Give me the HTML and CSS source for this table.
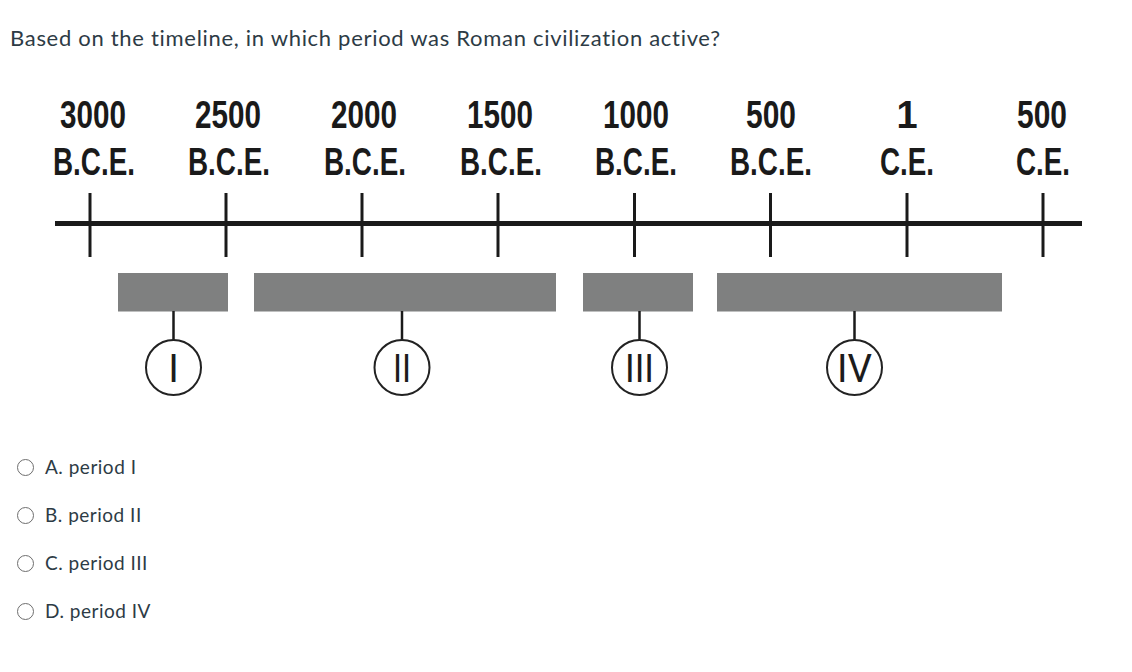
FILE: index.html
```html
<!DOCTYPE html>
<html>
<head>
<meta charset="utf-8">
<link rel="stylesheet" href="styles.css">
</head>
<body>
<p class="question">Based on the timeline, in which period was Roman civilization active?</p>
<svg class="timeline" width="1132" height="330" viewBox="0 80 1132 330" xmlns="http://www.w3.org/2000/svg">
  <g class="labels">
    <text x="93" y="128" textLength="66" lengthAdjust="spacingAndGlyphs">3000</text>
    <text x="94" y="175" textLength="82" lengthAdjust="spacingAndGlyphs">B.C.E.</text>
    <text x="228" y="128" textLength="66" lengthAdjust="spacingAndGlyphs">2500</text>
    <text x="229" y="175" textLength="82" lengthAdjust="spacingAndGlyphs">B.C.E.</text>
    <text x="364" y="128" textLength="66" lengthAdjust="spacingAndGlyphs">2000</text>
    <text x="365" y="175" textLength="82" lengthAdjust="spacingAndGlyphs">B.C.E.</text>
    <text x="500" y="128" textLength="66" lengthAdjust="spacingAndGlyphs">1500</text>
    <text x="501" y="175" textLength="82" lengthAdjust="spacingAndGlyphs">B.C.E.</text>
    <text x="636" y="128" textLength="66" lengthAdjust="spacingAndGlyphs">1000</text>
    <text x="636" y="175" textLength="82" lengthAdjust="spacingAndGlyphs">B.C.E.</text>
    <text x="771" y="128" textLength="50" lengthAdjust="spacingAndGlyphs">500</text>
    <text x="771" y="175" textLength="82" lengthAdjust="spacingAndGlyphs">B.C.E.</text>
    <text x="907" y="128">1</text>
    <text x="907" y="175" textLength="54" lengthAdjust="spacingAndGlyphs">C.E.</text>
    <text x="1042" y="128" textLength="50" lengthAdjust="spacingAndGlyphs">500</text>
    <text x="1043" y="175" textLength="54" lengthAdjust="spacingAndGlyphs">C.E.</text>
  </g>
  <line class="axis" x1="55" y1="223.5" x2="1082" y2="223.5"/>
  <g class="ticks">
    <line x1="90" y1="193" x2="90" y2="257"/>
    <line x1="226" y1="193" x2="226" y2="257"/>
    <line x1="362" y1="193" x2="362" y2="257"/>
    <line x1="498" y1="193" x2="498" y2="257"/>
    <line x1="634.5" y1="193" x2="634.5" y2="257"/>
    <line x1="770.5" y1="193" x2="770.5" y2="257"/>
    <line x1="907" y1="193" x2="907" y2="257"/>
    <line x1="1043" y1="193" x2="1043" y2="257"/>
  </g>
  <g class="bars">
    <rect x="118" y="273" width="110" height="38.5"/>
    <rect x="254" y="273" width="302" height="38.5"/>
    <rect x="583" y="273" width="110" height="38.5"/>
    <rect x="717" y="273" width="285" height="38.5"/>
  </g>
  <g class="stems">
    <line x1="173.5" y1="311" x2="173.5" y2="340"/>
    <line x1="402" y1="311" x2="402" y2="340"/>
    <line x1="639.5" y1="311" x2="639.5" y2="340"/>
    <line x1="854.5" y1="311" x2="854.5" y2="340"/>
  </g>
  <g class="circles">
    <circle cx="173.5" cy="367.5" r="27.5"/>
    <circle cx="402" cy="367.5" r="27.5"/>
    <circle cx="639.5" cy="367.5" r="27.5"/>
    <circle cx="854.5" cy="367.5" r="27.5"/>
  </g>
  <g class="numerals">
    <text x="173.5" y="381.5">I</text>
    <text x="402" y="381.5" textLength="18" lengthAdjust="spacingAndGlyphs">II</text>
    <text x="639.5" y="381.5" textLength="29" lengthAdjust="spacingAndGlyphs">III</text>
    <text x="854.5" y="381.5" textLength="35" lengthAdjust="spacingAndGlyphs">IV</text>
  </g>
</svg>
<div class="options">
  <label class="option"><span class="radio"></span><span class="opt-text">A. period I</span></label>
  <label class="option"><span class="radio"></span><span class="opt-text">B. period II</span></label>
  <label class="option"><span class="radio"></span><span class="opt-text">C. period III</span></label>
  <label class="option"><span class="radio"></span><span class="opt-text">D. period IV</span></label>
</div>
</body>
</html>
```
FILE: styles.css
```css
html, body {
  margin: 0;
  padding: 0;
  background: #ffffff;
}
body {
  font-family: "Lato", "Liberation Sans", sans-serif;
  color: #2d3b45;
}
.question {
  margin: 0 0 30px 0;
  padding: 26px 0 0 10px;
  font-size: 22px;
  letter-spacing: 0.7px;
  line-height: 24px;
}
.timeline {
  display: block;
}
.labels text {
  font-family: "Liberation Sans", sans-serif;
  font-weight: 700;
  font-size: 38px;
  fill: #1a1a1a;
  text-anchor: middle;
}
.axis {
  stroke: #1a1a1a;
  stroke-width: 5;
}
.ticks line {
  stroke: #1a1a1a;
  stroke-width: 3;
}
.bars rect {
  fill: #7f8080;
}
.stems line {
  stroke: #1a1a1a;
  stroke-width: 2.5;
}
.circles circle {
  fill: #ffffff;
  stroke: #222222;
  stroke-width: 2;
}
.numerals text {
  font-family: "Roboto", "Liberation Sans", sans-serif;
  font-weight: 400;
  font-size: 39px;
  fill: #1c1c1c;
  text-anchor: middle;
}
.options {
  margin-top: 33px;
  display: flex;
  flex-direction: column;
}
.option {
  display: flex;
  align-items: center;
  height: 48px;
  padding-left: 17px;
  font-size: 19px;
  letter-spacing: 0.5px;
}
.radio {
  box-sizing: border-box;
  width: 17px;
  height: 17px;
  border: 1.5px solid #6e6e6e;
  border-radius: 50%;
  margin-right: 11px;
  flex: none;
}
.opt-text {
  line-height: 20px;
}
```
